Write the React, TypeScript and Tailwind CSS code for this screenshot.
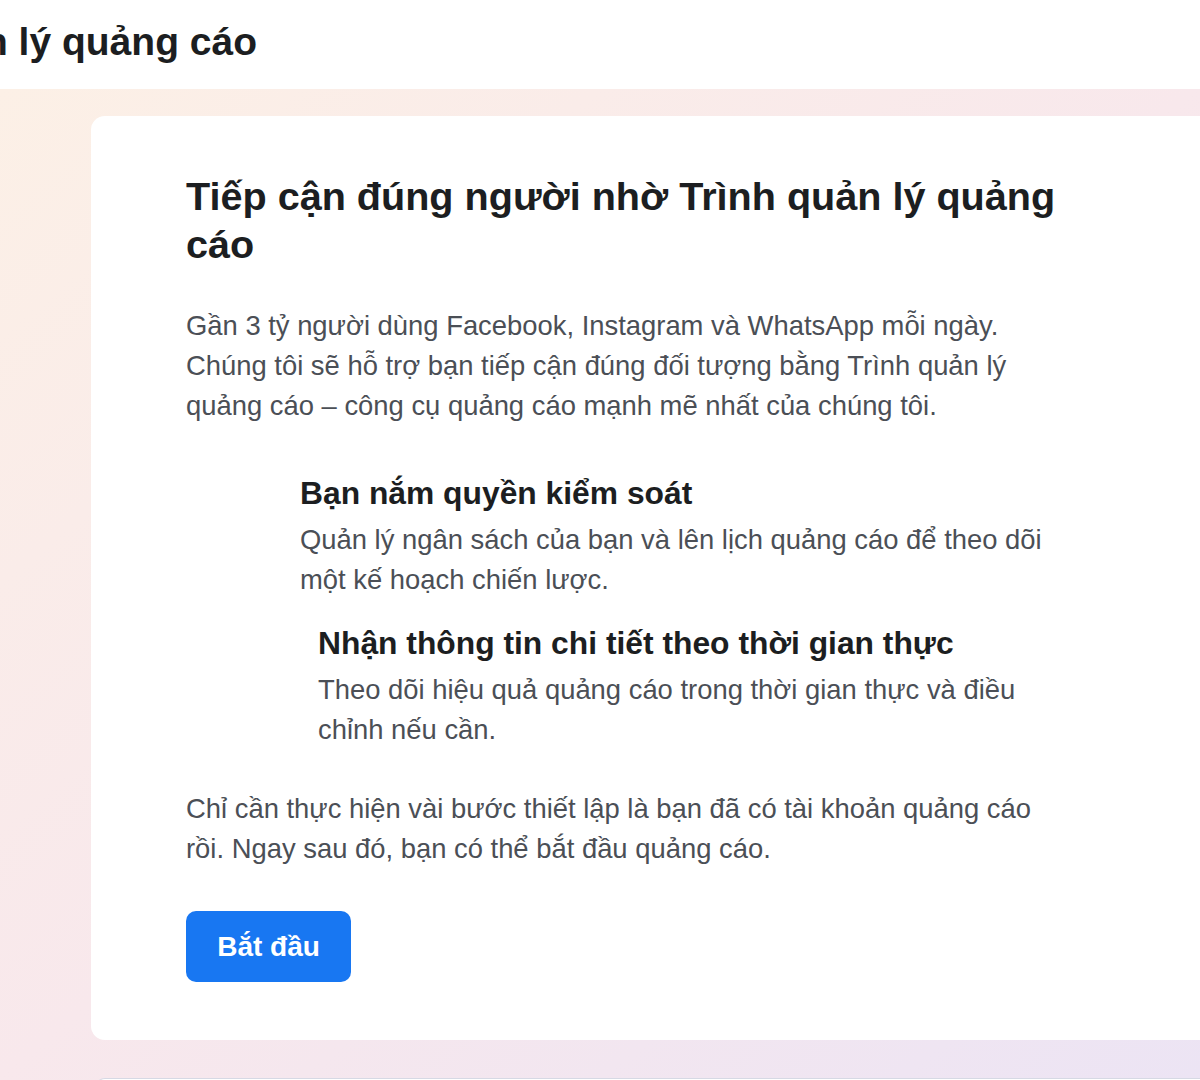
import React from 'react';

const features = [
  {
    title: 'Bạn nắm quyền kiểm soát',
    body: 'Quản lý ngân sách của bạn và lên lịch quảng cáo để theo dõi một kế hoạch chiến lược.',
    indent: 'pl-[114px]',
  },
  {
    title: 'Nhận thông tin chi tiết theo thời gian thực',
    body: 'Theo dõi hiệu quả quảng cáo trong thời gian thực và điều chỉnh nếu cần.',
    indent: 'pl-[132px]',
  },
];

export default function App() {
  return (
    <div className="w-[1200px] h-[1080px] overflow-hidden bg-white font-['Liberation_Sans',Arial,sans-serif]">
      {/* Top bar */}
      <div className="h-[89px] bg-white flex items-center">
        <div className="w-[257px] flex justify-end overflow-hidden whitespace-nowrap pb-[6px]">
          <span className="text-[39px] font-bold text-[#1c1e21] leading-none">Trình quản lý quảng cáo</span>
        </div>
      </div>

      {/* Gradient body */}
      <div className="h-[991px] pt-[27px] pl-[91px] bg-gradient-to-br from-[#fcf0e6] via-[#f8e8ec] to-[#ece4f4]">
        <div className="w-[1160px] bg-white rounded-l-[14px] pt-[56px] pb-[58px] pl-[95px]">
          <div className="w-[874px]">
            <h1 className="text-[39.6px] leading-[48px] font-bold text-[#1c1e21]">
              Tiếp cận đúng người nhờ Trình quản lý quảng cáo
            </h1>
            <p className="mt-[38px] text-[27.4px] leading-[40px] text-[#4b4f56]">
              Gần 3 tỷ người dùng Facebook, Instagram và WhatsApp mỗi ngày. Chúng tôi sẽ hỗ trợ bạn tiếp cận đúng đối tượng bằng Trình quản lý quảng cáo – công cụ quảng cáo mạnh mẽ nhất của chúng tôi.
            </p>

            <div className="mt-[49px] flex flex-col gap-[25px]">
              {features.map((f) => (
                <div key={f.title} className={f.indent}>
                  <h3 className="text-[31.8px] leading-[36px] font-bold text-[#1c1e21]">{f.title}</h3>
                  <p className="mt-[9px] text-[27.4px] leading-[40px] text-[#4b4f56]">{f.body}</p>
                </div>
              ))}
            </div>

            <p className="mt-[39px] text-[27.4px] leading-[40px] text-[#4b4f56]">
              Chỉ cần thực hiện vài bước thiết lập là bạn đã có tài khoản quảng cáo rồi. Ngay sau đó, bạn có thể bắt đầu quảng cáo.
            </p>

            <button className="mt-[42px] w-[165px] h-[71px] rounded-[10px] bg-[#1877f2] text-white text-[28px] font-bold">
              Bắt đầu
            </button>
          </div>
        </div>

        <div className="mt-[38px] ml-[4px] h-[40px] bg-white rounded-tl-[10px] border-t border-l border-[#d6d9e4]" />
      </div>
    </div>
  );
}
